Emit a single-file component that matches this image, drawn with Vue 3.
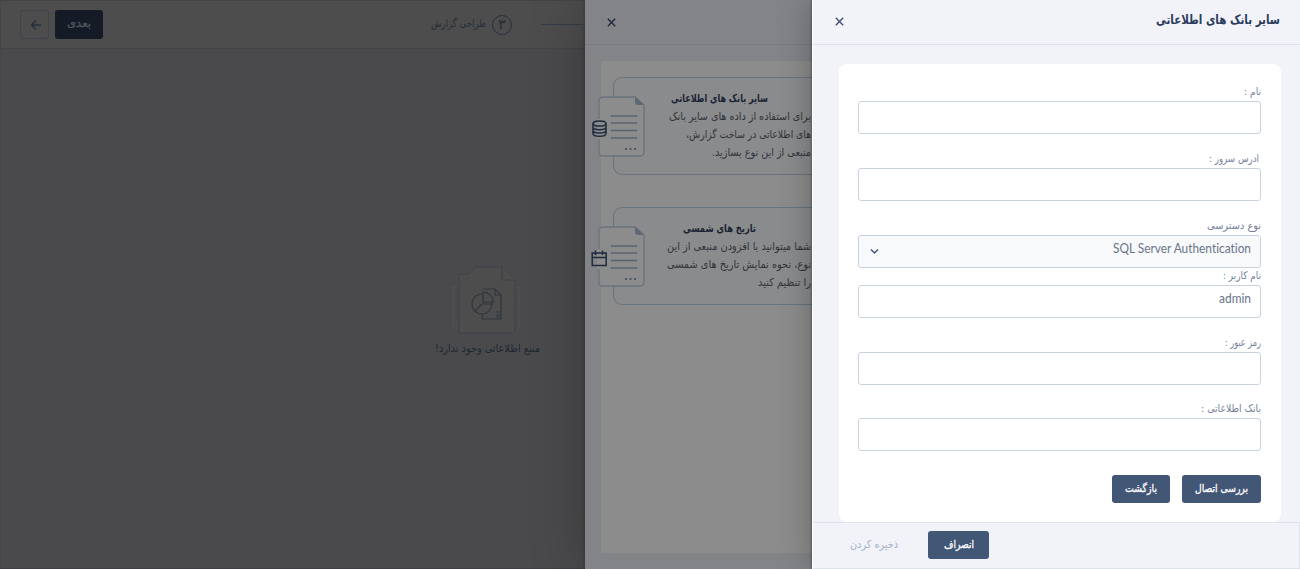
<script setup>
import { h } from 'vue'

// Single line of text fitted to a fixed width; `b` is the baseline inside height `ht`.
const Line = (p) =>
  h('svg', { width: p.w, height: p.ht || 18, class: 'line' }, [
    h('text', {
      x: p.ltr ? 0 : p.w,
      y: p.b || 12,
      direction: p.ltr ? 'ltr' : 'rtl',
      textLength: p.w,
      lengthAdjust: 'spacingAndGlyphs',
    }, p.t),
  ])
Line.props = ['t', 'w', 'ht', 'b', 'ltr']

const fields = [
  { label: 'نام :', w: 17, gap: 17 },
  { label: 'ادرس سرور :', w: 50, gap: 17, inset: true },
  { label: 'نوع دسترسی', w: 54, gap: 0, value: 'SQL Server Authentication', vw: 138, select: true },
  { label: 'نام کاربر :', w: 38, gap: 17, value: 'admin', vw: 32 },
  { label: 'رمز عبور :', w: 36, gap: 16 },
  { label: 'بانک اطلاعاتی :', w: 60, gap: 24 },
]

const sources = [
  {
    title: 'سایر بانک های اطلاعاتی', w: 97, end: 43, icon: 'db',
    lines: [
      { t: 'برای استفاده از داده های سایر بانک', w: 142 },
      { t: 'های اطلاعاتی در ساخت گزارش،', w: 125 },
      { t: 'منبعی از این نوع بسازید.', w: 99 },
    ],
  },
  {
    title: 'تاریخ های شمسی', w: 73, end: 55, icon: 'cal',
    lines: [
      { t: 'شما میتوانید با افزودن منبعی از این', w: 144 },
      { t: 'نوع، نحوه نمایش تاریخ های شمسی', w: 144 },
      { t: 'را تنظیم کنید', w: 53 },
    ],
  },
]
</script>

<template>
  <div class="app">
    <main class="page">
      <header class="topbar">
        <div class="back">
          <svg width="12" height="12" viewBox="0 0 12 12"><path d="M11 6H1.5M6 1.5L1.5 6L6 10.5" /></svg>
        </div>
        <div class="next"><Line t="بعدی" :w="24" :ht="20" :b="13" /></div>
        <div class="step">
          <Line t="طراحی گزارش" :w="55" :ht="20" :b="12" />
          <span class="num"><Line t="۳" :w="8" :ht="18" :b="13" /></span>
          <i class="rule"></i>
        </div>
      </header>
      <section class="empty">
        <svg width="70" height="72" viewBox="0 0 70 72" class="emptyicon">
          <path class="side" d="M8 22H2V62H8M62 22H68V62H62" />
          <path class="sheet" d="M8 11Q8 9 10 9H17Q18 9 19 8L23 3Q24 2 26 2H51L64 15V66Q64 68 62 68H10Q8 68 8 66Z" />
          <path class="sheet" d="M51 2V15H64" />
          <path class="ink" d="M32 24H44L50 30V54H31V49M44 24V30H50M45 47H49M45 50H49M45 52H49" />
          <circle class="ink sheetfill" cx="31" cy="39" r="10" />
          <path class="ink sheetfill" d="M32 27V37H42.5A10.500 10.500 0 0 0 32 27ZM31 39L24 46M31 39H41" />
        </svg>
        <Line t="منبع اطلاعاتی وجود ندارد!" :w="105" :ht="18" :b="12" />
      </section>
    </main>

    <aside class="picker">
      <header class="phead">
        <svg width="9" height="9" viewBox="0 0 9 9"><path d="M.8.8L8.200 8.200M8.200.8L.8 8.200" /></svg>
      </header>
      <div class="panel">
        <article v-for="s in sources" :key="s.icon" class="source">
          <svg class="doc" width="56" height="64" viewBox="0 0 56 64">
            <path class="paper" d="M12 2H44L53 10V57Q53 61 49 61H12Q8 61 8 57V6Q8 2 12 2Z" />
            <path class="fold" d="M44 2V7Q44 10 47 10H53Z" />
            <path class="rows" d="M20 21H46M20 28H46M20 35.500H46M20 43H46" />
            <path class="dots" d="M34 54h2M38.500 54h2M43 54h2" />
            <rect class="mask" x="6" y="24" width="4" height="20" />
            <g v-if="s.icon === 'db'" class="mark">
              <ellipse cx="8.500" cy="28.500" rx="6.500" ry="2.600" />
              <path d="M2 28.500V38.500C2 42.300 15 42.300 15 38.500V28.500M2 32C2 35.500 15 35.500 15 32M2 35.300C2 39 15 39 15 35.300" />
            </g>
            <g v-else class="mark">
              <path d="M1.200 28H15.200V40.500H1.200ZM1.200 32.500H15.200M4.500 25.500V30M11.500 25.500V30" />
            </g>
          </svg>
          <div class="copy">
            <Line class="stitle" :style="{ marginRight: s.end + 'px' }" :t="s.title" :w="s.w" :b="12" />
            <Line v-for="l in s.lines" :key="l.t" :t="l.t" :w="l.w" :b="12" />
          </div>
        </article>
      </div>
    </aside>

    <aside class="drawer">
      <header class="dhead">
        <svg width="9" height="9" viewBox="0 0 9 9"><path d="M.8.8L8.200 8.200M8.200.8L.8 8.200" /></svg>
        <Line class="dtitle" t="سایر بانک های اطلاعاتی" :w="124" :ht="28" :b="18" />
      </header>
      <div class="body">
        <form class="card">
          <div v-for="f in fields" :key="f.label" class="field" :style="{ marginBottom: f.gap + 'px' }">
            <Line :class="{ inset: f.inset }" :t="f.label" :w="f.w" :ht="17" :b="11" />
            <div class="box" :class="{ select: f.select }">
              <svg v-if="f.select" class="chev" width="9" height="7" viewBox="0 0 9 7"><path d="M1 1.500L4.500 5L8 1.500" /></svg>
              <Line v-if="f.value" class="value" :t="f.value" :w="f.vw" :ht="20" :b="12" ltr />
            </div>
          </div>
          <div class="actions">
            <div class="btn w58"><Line t="بازگشت" :w="32" :b="12" /></div>
            <div class="btn w79"><Line t="بررسی اتصال" :w="53" :b="12" /></div>
          </div>
        </form>
      </div>
      <footer class="foot">
        <Line class="save" t="ذخیره کردن" :w="48" :b="12" />
        <div class="btn w61"><Line t="انصراف" :w="30" :b="12" /></div>
      </footer>
    </aside>
  </div>
</template>

<style>
body { margin: 0; background: #48484a; overflow: hidden; }
</style>

<style scoped>
* { box-sizing: border-box; }
.app {
  position: relative; width: 1300px; height: 569px; overflow: hidden;
  font-family: "DejaVu Sans", sans-serif; font-size: 11px;
}
svg { display: block; flex: none; overflow: visible; fill: none; }
.line { fill: currentColor; }

.page { width: 585px; height: 569px; background: #4a4a4c; border-left: 1px solid #44464a; border-bottom: 1px solid #404144; }
.topbar {
  display: flex; align-items: center; height: 49px; padding-left: 19px;
  background: #4d4d4d; border-top: 1px solid #424448; border-bottom: 1px solid #434548;
}
.back { display: flex; align-items: center; justify-content: center; width: 29px; height: 29px; border: 1px solid #3e444c; border-radius: 3px; }
.back svg { stroke: #262f3f; stroke-width: 1.5; margin-left: 2px; }
.next { display: flex; justify-content: center; align-items: center; width: 48px; height: 29px; margin-left: 6px; padding-bottom: 1px; background: #141b27; border-radius: 3px; color: #53575d; stroke: #53575d; stroke-width: .3; }
.step { display: flex; align-items: center; margin-left: 328px; color: #262d38; }
.num { display: flex; justify-content: center; align-items: center; width: 20px; height: 20px; margin-left: 6px; border: 1.500px solid #27303d; border-radius: 50%; font-size: 14px; }
.rule { width: 42px; height: 1px; margin-left: 29px; background: #363c45; }
.empty { display: flex; flex-direction: column; align-items: flex-start; width: 584px; margin-top: 216px; padding-left: 434px; color: #202733; }
.emptyicon { margin: 0 0 3px 16px; }
.side { stroke: #4f4f4f; stroke-width: 2; stroke-dasharray: 2 1; }
.sheet { fill: #4d4d4d; stroke: #3d4248; }
.ink { stroke: #30363f; stroke-width: 1.200; }
.sheetfill { fill: #4d4d4d; }

.picker {
  position: absolute; left: 585px; top: 0; width: 228px; height: 569px;
  background: #838488; box-shadow: 0 0 50px rgba(0, 0, 0, .25), -1px 0 3px rgba(0, 0, 0, .2);
}
.phead, .dhead { display: flex; align-items: center; height: 45px; }
.phead { padding-left: 22px; border-bottom: 1px solid #787b80; }
.phead svg { stroke: #202a3d; stroke-width: 1.400; }
.panel { display: flex; flex-direction: column; gap: 32px; height: 492px; margin: 16px 0 0 16px; padding: 16px 0 0 12px; background: #8c8c8c; }
.source { display: flex; height: 98px; border: 1px solid #69737d; border-right: 0; border-radius: 9px 0 0 9px; background: #8a8b8c; }
.doc { margin: 17px 0 0 -23px; }
.paper { fill: #8c8c8c; stroke: #69737d; stroke-width: 1.300; }
.fold { fill: #5e6773; }
.rows { stroke: #59636f; stroke-width: 1.300; }
.dots { stroke: #4e5866; stroke-width: 2; }
.mask { fill: #8c8c8c; }
.mark path, .mark ellipse { stroke: #1f2a3c; stroke-width: 1.500; }
.copy { display: flex; flex-direction: column; align-items: flex-end; flex: 1; padding: 12px 2px 0 0; color: #30343a; }
.stitle { font-weight: bold; color: #1a2333; }

.drawer {
  position: absolute; left: 812px; top: 0; width: 488px; height: 569px; display: flex; flex-direction: column;
  background: #f1f3f9; border-left: 1px solid #fff; box-shadow: 0 0 32px rgba(0, 0, 0, .28), -1px 0 2px rgba(0, 0, 0, .25);
}
.dhead { justify-content: space-between; padding: 0 20px 0 22px; border-bottom: 1px solid #dfe3ec; }
.dhead svg:first-child { stroke: #405273; stroke-width: 1.400; }
.dtitle { font-size: 13px; font-weight: bold; color: #2b3c5d; margin-bottom: 4px; }
.body { padding: 19px 19px 0 25.5px; height: 477px; }
.card { height: 458px; padding: 20px 20px 0 19px; border-radius: 8px; background: #fff; }
.field { display: flex; flex-direction: column; align-items: flex-end; color: #74819b; font-size: 10.5px; }
.inset { margin-right: 2px; }
.box { display: flex; align-items: center; justify-content: flex-end; width: 403px; height: 33px; padding: 0 9px 0 11px; border: 1px solid #c8d3e0; border-radius: 3px; background: #fff; }
.select { background: #f8f9fb; }
.chev { margin-right: auto; stroke: #42577b; stroke-width: 1.500; }
.value { font-family: Lato, sans-serif; font-size: 12.500px; font-variant-ligatures: none; color: #68758a; }
.actions { display: flex; justify-content: flex-end; gap: 12px; }
.btn { display: flex; align-items: center; justify-content: center; height: 28px; border-radius: 3px; background: #425676; color: #fff; stroke: #fff; stroke-width: .3; }
.w58 { width: 58px; }
.w79 { width: 79px; }
.w61 { width: 61px; }
.foot { display: flex; align-items: center; gap: 30px; height: 48px; padding-left: 37px; border: 1px solid #dce3ec; border-left: 0; }
.save { color: #a4b1c7; }
</style>
